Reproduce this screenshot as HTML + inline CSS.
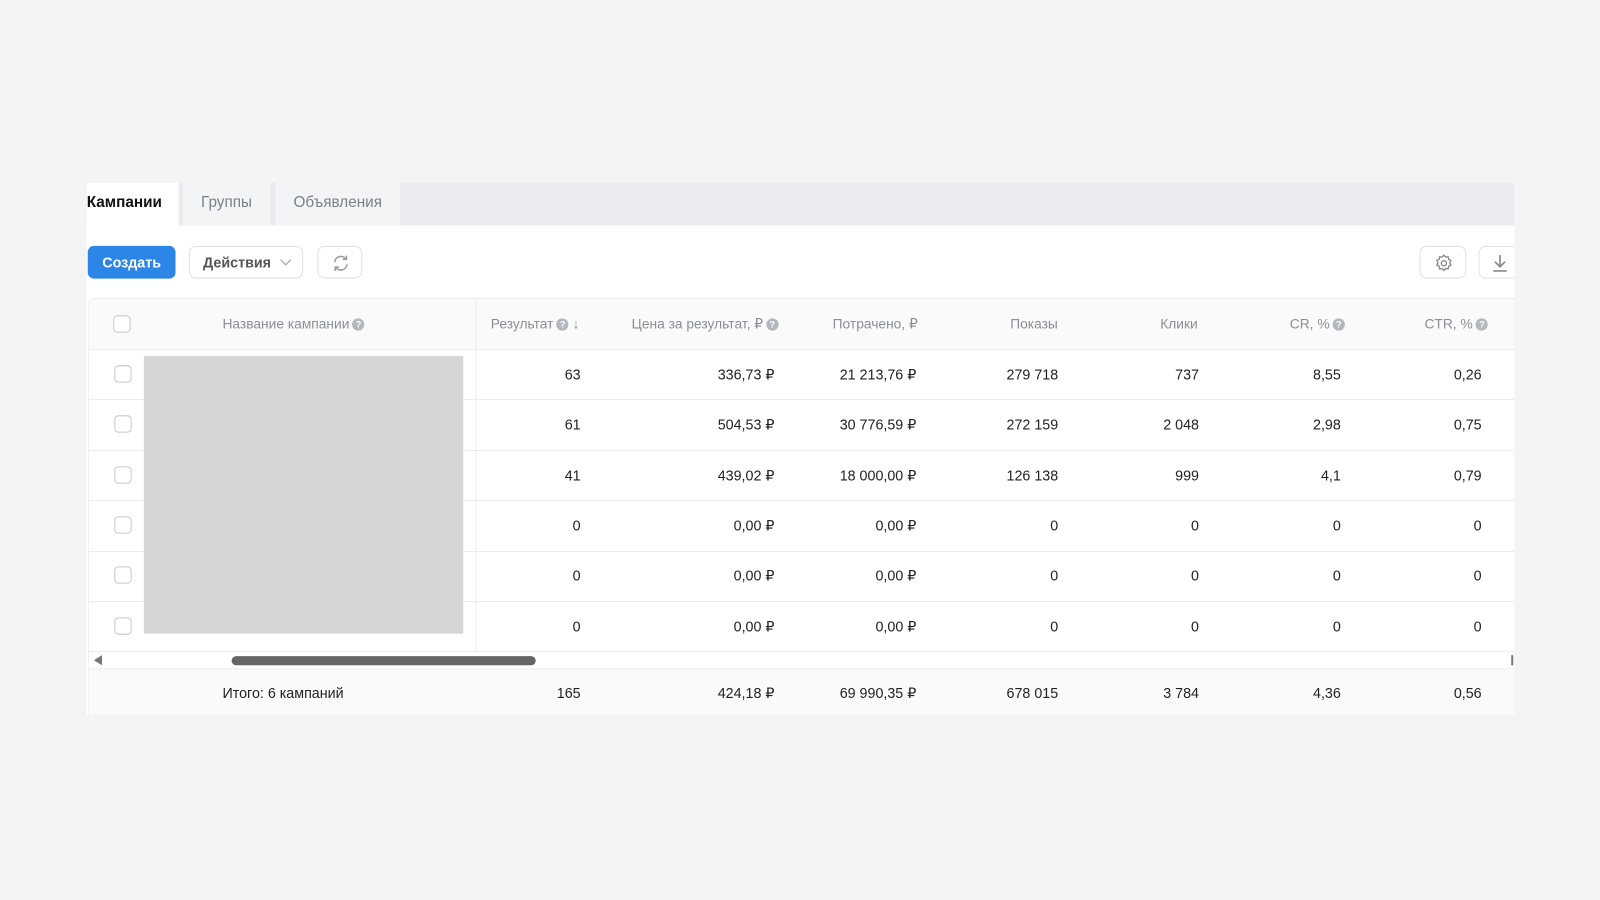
<!DOCTYPE html>
<html><head><meta charset="utf-8"><style>
*{margin:0;padding:0;box-sizing:border-box}
body{width:1600px;height:900px;background:#f4f4f4;font-family:"Liberation Sans","DejaVu Sans",sans-serif;position:relative;overflow:hidden;color:#222}
#w{position:absolute;left:0;top:0;width:1568px;height:882px;transform:scale(1.0204);transform-origin:0 0}
.a{position:absolute}
.tabs{left:85px;top:179px;width:1399px;height:42px;background:#eaebef}
.tab{top:0;height:42px;font-size:15px;line-height:40px;text-align:center;color:#7b7f88;background:#f3f4f6}
.panel{left:85px;top:221px;width:1399px;height:481px;background:#fff}
.btn{border:1px solid #dfe1e5;border-radius:7px;background:#fff}
.cb{width:17px;height:17px;border:1.5px solid #c4c8cf;border-radius:4px;background:#fff}
.h{font-size:13.5px;color:#8a8e96;top:310px}
.c{font-size:14px;color:#222}
.q{display:inline-block;width:12px;height:12px;border-radius:50%;background:#b3b8c0;color:#fff;font-size:9px;line-height:12px;text-align:center;font-weight:bold;vertical-align:1px;margin-left:3px}
.line{height:1px;background:#ececec}
</style></head><body><div id="w">
<div class="a tabs">
 <div class="a tab" style="left:0;width:90px;background:#fff;color:#111;font-weight:bold;text-align:left">Кампании</div>
 <div class="a tab" style="left:94px;width:86px">Группы</div>
 <div class="a tab" style="left:185px;width:122px">Объявления</div>
</div>
<div class="a panel"></div>
<div class="a" style="left:86px;top:241px;width:86px;height:32px;background:#2b86e8;border-radius:6px;color:#fff;font-weight:bold;font-size:14px;line-height:32px;text-align:center">Создать</div>
<div class="a btn" style="left:185px;top:241px;width:112px;height:32px;font-size:14px;font-weight:bold;color:#555;line-height:30px;padding-left:13px">Действия
 <svg class="a" style="left:88px;top:11px" width="12" height="8" viewBox="0 0 12 8"><path d="M1 1.5l5 5 5-5" fill="none" stroke="#aaa" stroke-width="1.3"/></svg></div>
<div class="a btn" style="left:311px;top:241px;width:44px;height:32px">
 <svg class="a" style="left:12px;top:6px" width="20" height="20" viewBox="0 0 20 20" fill="none" stroke="#999" stroke-width="1.5"><path d="M4 9a6 6 0 0 1 11-3M16 11a6 6 0 0 1-11 3"/><path d="M15.5 2.5v3.7h-3.7M4.5 17.5v-3.7h3.7"/></svg></div>
<div class="a btn" style="left:1391px;top:241px;width:46px;height:32px">
 <svg class="a" style="left:13px;top:6px" width="20" height="20" viewBox="0 0 24 24" fill="none" stroke="#888" stroke-width="1.6"><circle cx="12" cy="12" r="3"/><path d="M12 2.5l2 2.2 3-.3.6 2.9 2.6 1.5-1.2 2.7 1.2 2.7-2.6 1.5-.6 2.9-3-.3-2 2.2-2-2.2-3 .3-.6-2.9-2.6-1.5 1.2-2.7-1.2-2.7 2.6-1.5.6-2.9 3 .3z"/></svg></div>
<div class="a btn" style="left:1449px;top:241px;width:35px;height:32px;border-right:none;border-radius:7px 0 0 7px">
 <svg class="a" style="left:12px;top:7px" width="16" height="18" viewBox="0 0 16 18" fill="none" stroke="#888" stroke-width="1.6"><path d="M8 1v11M3 7.5l5 5 5-5M1.5 16.5h13"/></svg></div>
<div class="a" style="left:86px;top:292px;width:1398px;height:410px;border:1px solid #ececec;border-right:none;border-radius:6px 0 0 0"></div>
<div class="a" style="left:87px;top:293px;width:1397px;height:49px;background:#fafafa"></div>
<div class="a" style="left:466px;top:293px;width:1px;height:345px;background:#ececec"></div>
<div class="a cb" style="left:111px;top:309px"></div>
<div class="a h" style="left:218px">Название кампании<span class="q">?</span></div>
<div class="a h" style="left:481px">Результат<span class="q">?</span> ↓</div>
<div class="a h" style="left:619px">Цена за результат, ₽<span class="q">?</span></div>
<div class="a h" style="left:816px">Потрачено, ₽</div>
<div class="a h" style="left:990px">Показы</div>
<div class="a h" style="left:1137px">Клики</div>
<div class="a h" style="left:1264px">CR, %<span class="q">?</span></div>
<div class="a h" style="left:1396px">CTR, %<span class="q">?</span></div>
<div class="a line" style="left:87px;top:342px;width:1397px"></div>
<div class="a line" style="left:87px;top:391px;width:1397px"></div>
<div class="a line" style="left:87px;top:441px;width:1397px"></div>
<div class="a line" style="left:87px;top:490px;width:1397px"></div>
<div class="a line" style="left:87px;top:540px;width:1397px"></div>
<div class="a line" style="left:87px;top:589px;width:1397px"></div>
<div class="a line" style="left:87px;top:638px;width:1397px"></div>
<div class="a line" style="left:87px;top:655px;width:1397px"></div>
<div class="a cb" style="left:112px;top:358px"></div>
<div class="a cb" style="left:112px;top:407px"></div>
<div class="a cb" style="left:112px;top:457px"></div>
<div class="a cb" style="left:112px;top:506px"></div>
<div class="a cb" style="left:112px;top:555px"></div>
<div class="a cb" style="left:112px;top:605px"></div>
<div class="a" style="left:141px;top:349px;width:313px;height:272px;background:#d6d6d6"></div>
<div class="a" style="left:87px;top:656px;width:1397px;height:45px;background:#fafafa"></div>
<svg class="a" style="left:92px;top:642px" width="9" height="10"><path d="M8 0v10L0 5z" fill="#777"/></svg>
<div class="a" style="left:227px;top:643px;width:298px;height:9px;border-radius:5px;background:#656565"></div>
<div class="a" style="left:1481px;top:642px;width:2px;height:10px;background:#777"></div>
<div class="a c" style="left:218px;top:671px">Итого: 6 кампаний</div>
<div id="rows"></div>
</div>
<script>
const R=[[367,"63","336,73 ₽","21 213,76 ₽","279 718","737","8,55","0,26"],
[416,"61","504,53 ₽","30 776,59 ₽","272 159","2 048","2,98","0,75"],
[466,"41","439,02 ₽","18 000,00 ₽","126 138","999","4,1","0,79"],
[515,"0","0,00 ₽","0,00 ₽","0","0","0","0"],
[564,"0","0,00 ₽","0,00 ₽","0","0","0","0"],
[614,"0","0,00 ₽","0,00 ₽","0","0","0","0"],
[679,"165","424,18 ₽","69 990,35 ₽","678 015","3 784","4,36","0,56"]];
const X=[569,759,898,1037,1175,1314,1452];let h="";
for(const r of R)for(let i=0;i<7;i++)h+=`<div class="a c" style="right:${1568-X[i]}px;top:${r[0]-8}px">${r[i+1]}</div>`;
document.getElementById("rows").innerHTML=h;
</script>
</body></html>
